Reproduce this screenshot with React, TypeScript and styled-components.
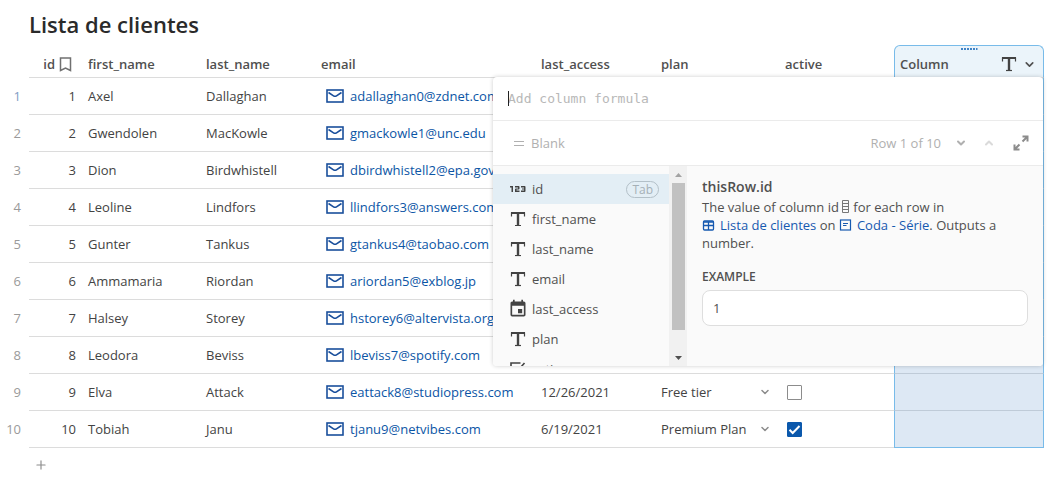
import React from "react";
import styled, { createGlobalStyle } from "styled-components";
import { ChevronDown, ChevronUp, Plus } from "lucide-react";
import { Md123, MdEvent } from "react-icons/md";

const GlobalStyle = createGlobalStyle`
  * { box-sizing: border-box; }
  body {
    margin: 0;
    background: #fff;
    color: #434343;
    font-family: "Open Sans", "Noto Sans", sans-serif;
    font-size: 13px;
    line-height: 18px;
  }
  button, input, select { font: inherit; color: inherit; }
`;

const Page = styled.main`
  padding: 8px 12px 0 0;
`;

const Title = styled.h1`
  margin: 0 0 5px 29px;
  font-size: 22px;
  line-height: 32px;
  font-weight: 600;
  color: #2a2a2a;
`;

const Table = styled.table`
  width: 100%;
  table-layout: fixed;
  border-collapse: separate;
  border-spacing: 0;
`;

const Col = styled.col<{ $w?: number }>`
  width: ${(p) => (p.$w ? `${p.$w}px` : "auto")};
`;

const HeadCell = styled.th`
  height: 33px;
  padding: 6px 6px 0;
  border-bottom: 1px solid #dcdcdc;
  text-align: left;
  font-weight: 600;
  color: #505050;
  white-space: nowrap;
`;

const IdHead = styled.span`
  display: flex;
  align-items: center;
  justify-content: flex-end;
  gap: 4px;
  padding-right: 4px;
`;

const Corner = styled.td`
  padding: 0;
`;

const SelectedHead = styled(HeadCell)`
  position: relative;
  padding: 5px 5px 0;
  border: 1px solid #78bbe9;
  border-bottom-color: #dcdcdc;
  border-radius: 6px 6px 0 0;
  background: #ebf4fa;
`;

const SelectedLabel = styled.div`
  display: flex;
  align-items: center;
  gap: 4px;
  height: 18px;
  padding-right: 2px;
`;

const Grow = styled.span`
  flex: 1;
`;

const DragDots = styled.span`
  position: absolute;
  top: 2px;
  left: 50%;
  width: 17px;
  height: 2px;
  transform: translateX(-50%);
  background: repeating-linear-gradient(90deg, #3f83c6 0 2px, transparent 2px 3px);
`;

const IconButton = styled.button`
  display: inline-flex;
  align-items: center;
  justify-content: center;
  padding: 0;
  border: 0;
  background: none;
  color: inherit;
`;

const Cell = styled.td<{ $right?: boolean }>`
  height: 37px;
  padding: 0 6px;
  border-bottom: 1px solid #dcdcdc;
  text-align: ${(p) => (p.$right ? "right" : "left")};
  white-space: nowrap;
`;

const RowNumber = styled.th<{ $current?: boolean }>`
  padding: 0 8px 2px 0;
  text-align: right;
  font-weight: 400;
  color: ${(p) => (p.$current ? "#7f9dc4" : "#9a9a9a")};
`;

const SelectedCell = styled(Cell)<{ $last?: boolean }>`
  background: #dde8f4;
  border-left: 1px solid #78bbe9;
  border-right: 1px solid #78bbe9;
  border-bottom-color: ${(p) => (p.$last ? "#78bbe9" : "#bfcbd8")};
`;

const Email = styled.a`
  display: flex;
  align-items: center;
  gap: 6px;
  padding-left: 5px;
  color: #0b55a5;
  text-decoration: none;
`;

const PlanBox = styled.div`
  display: flex;
  align-items: center;
  justify-content: space-between;
  padding-right: 2px;
  svg { color: #8c8c8c; }
`;

const PlanSelect = styled.select`
  flex: 1;
  min-width: 0;
  padding: 0;
  border: 0;
  background: none;
  appearance: none;
`;

const Check = styled.input`
  display: block;
  appearance: none;
  width: 15px;
  height: 15px;
  margin: 0 0 0 2px;
  border: 1px solid #8c8c8c;
  border-radius: 1px;
  background: #fff;
  &:checked {
    border-color: #0b58ac;
    background: #0b58ac
      url("data:image/svg+xml,%3Csvg xmlns='http://www.w3.org/2000/svg' viewBox='0 0 13 13' fill='none' stroke='white' stroke-width='2'%3E%3Cpath d='M1.5 6.8l3.2 3.2 6.8-7'/%3E%3C/svg%3E")
      center / 13px 13px no-repeat;
  }
`;

const AddRow = styled(IconButton)`
  margin: 10px 0 0 34px;
  color: #8c8c8c;
`;

const Popup = styled.section`
  position: absolute;
  z-index: 2;
  top: 31px;
  right: 0;
  width: 550px;
  overflow: hidden;
  border-radius: 4px;
  background: #fff;
  box-shadow: 0 0 4px rgba(0, 0, 0, 0.2);
  font-weight: 400;
  color: #505050;
  white-space: normal;
`;

const FormulaInput = styled.input`
  display: block;
  width: 100%;
  height: 43px;
  padding: 0 15px;
  border: 0;
  outline: 0;
  background: none;
  font-family: "DejaVu Sans Mono", "Liberation Mono", monospace;
  font-size: 13px;
  &::placeholder { color: #b8b8b8; opacity: 1; }
`;

const FormulaRow = styled.div`
  position: relative;
  border-bottom: 1px solid #ebebeb;
`;

const Caret = styled.span`
  position: absolute;
  top: 14px;
  left: 15px;
  width: 1px;
  height: 15px;
  background: #222;
`;

const ResultBar = styled.div`
  display: flex;
  align-items: center;
  height: 45px;
  padding: 0 14px 0 20px;
  border-bottom: 1px solid #ebebeb;
  color: #b0b0b0;
`;

const Blank = styled.span`
  display: flex;
  flex: 1;
  align-items: center;
  gap: 6px;
`;

const Pager = styled.div`
  display: flex;
  align-items: center;
  gap: 12px;
`;

const PageButton = styled(IconButton)<{ $dim?: boolean }>`
  width: 16px;
  color: ${(p) => (p.$dim ? "#dadada" : "#b0b0b0")};
`;

const ExpandButton = styled(IconButton)`
  margin-left: 4px;
  color: #8c8c8c;
`;

const PopupBody = styled.div`
  display: flex;
  height: 200px;
  background: #fafafa;
`;

const Suggestions = styled.ul`
  width: 176px;
  margin: 0;
  padding: 8px 0 0;
  overflow: hidden;
  list-style: none;
`;

const Suggestion = styled.li<{ $active?: boolean }>`
  display: flex;
  align-items: center;
  gap: 2px;
  height: 30px;
  padding: 0 10px 0 13px;
  background: ${(p) => (p.$active ? "#e3eef5" : "none")};
`;

const Glyph = styled.span`
  display: flex;
  justify-content: center;
  width: 24px;
  color: #434343;
  svg { flex: none; }
`;

const TabHint = styled.kbd`
  padding: 0 5px;
  border: 1px solid #b3c0c8;
  border-radius: 9px;
  font-family: inherit;
  font-size: 12px;
  line-height: 15px;
  color: #a5b0b7;
`;

const Scrollbar = styled.div`
  display: flex;
  flex-direction: column;
  align-items: center;
  width: 18px;
  background: #f1f1f1;
`;

const Thumb = styled.div`
  flex: 1;
  width: 13px;
  margin-bottom: 19px;
  background: #c1c1c1;
`;

const ArrowSlot = styled.span`
  display: flex;
  align-items: center;
  justify-content: center;
  height: 17px;
`;

const Details = styled.div`
  flex: 1;
  padding: 12px 15px 0;
`;

const DetailTitle = styled.h2`
  margin: 0 0 2px;
  font-size: 14px;
  line-height: 18px;
  font-weight: 600;
`;

const Description = styled.p`
  margin: 0 0 16px;
  svg { vertical-align: -1px; }
`;

const ObjectLink = styled.a`
  color: #1659b0;
  text-decoration: none;
  white-space: nowrap;
  svg { margin-right: 5px; }
`;

const ExampleLabel = styled.h3`
  margin: 0 0 4px;
  font-size: 12px;
  line-height: 18px;
  font-weight: 600;
`;

const Example = styled.output`
  display: flex;
  align-items: center;
  height: 36px;
  padding: 0 10px;
  border: 1px solid #dedede;
  border-radius: 8px;
  background: #fff;
`;

const BookmarkIcon = () => (
  <svg width="13" height="15" viewBox="0 0 13 15" fill="none" stroke="#707070" strokeWidth="1.5">
    <path d="M1.5 1h10v12.500l-5-2.500-5 2.500z" />
  </svg>
);

const MailIcon = () => (
  <svg width="18" height="14" viewBox="0 0 18 14" fill="none" stroke="#1a4f9c" strokeWidth="1.6">
    <rect x="1" y="1" width="16" height="12" />
    <path d="M2.500 3.500l5 3.300q1.500 1 3 0l5-3.300" />
  </svg>
);

const ExpandIcon = () => (
  <svg width="16" height="16" viewBox="0 0 16 16" fill="none" stroke="currentColor" strokeWidth="2">
    <path d="M9.500 1.500h5v5M14 2 9.500 6.500M6.500 14.500h-5v-5M2 14l4.500-4.500" />
  </svg>
);

const ColumnIcon = () => (
  <svg width="11" height="13" viewBox="0 0 11 13" fill="none" stroke="#777">
    <path d="M3.500 .5h6v12h-6zM3.500 3.500h6M3.500 6.500h6M3.500 9.500h6" />
  </svg>
);

const TableIcon = () => (
  <svg width="13" height="11" viewBox="0 0 13 11" fill="none" stroke="currentColor" strokeWidth="1.300">
    <rect x="1.500" y="1" width="10" height="9" rx="1" />
    <path d="M1.500 2h10M1.500 5.500h10M6.500 2v8" />
  </svg>
);

const DocIcon = () => (
  <svg width="13" height="12" viewBox="0 0 13 12" fill="none" stroke="currentColor" strokeWidth="1.200">
    <rect x="1.500" y="1" width="10" height="10" />
    <path d="M4 4.500h5M4 6.500h3.500" />
  </svg>
);

const ScrollArrow = ({ up }: { up?: boolean }) => (
  <svg width="7" height="4" viewBox="0 0 7 4" fill={up ? "#a3a3a3" : "#505050"}>
    <path d={up ? "M0 4 3.500 0 7 4z" : "M0 0h7L3.500 4z"} />
  </svg>
);

const TextGlyph = () => (
  <svg width="20" height="20" viewBox="0 0 20 20" fill="none" stroke="#434343">
    <path d="M3 4h14" strokeWidth="2" />
    <path d="M3.500 3.500v4M16.500 3.500v4" strokeWidth="1.200" />
    <path d="M10 4v12.500" strokeWidth="2.400" />
    <path d="M7 16.500h6" strokeWidth="1.200" />
  </svg>
);

const CheckGlyph = () => (
  <svg width="20" height="20" viewBox="0 0 20 20" fill="none" stroke="currentColor" strokeWidth="1.600">
    <path d="M12.500 4H3v13h13v-6" />
    <path d="M6.500 9l3 3 7-8" />
  </svg>
);

type Client = {
  first: string;
  last: string;
  email: string;
  access?: string;
  plan?: string;
  active?: boolean;
};

const clients: Client[] = [
  { first: "Axel", last: "Dallaghan", email: "adallaghan0@zdnet.com" },
  { first: "Gwendolen", last: "MacKowle", email: "gmackowle1@unc.edu" },
  { first: "Dion", last: "Birdwhistell", email: "dbirdwhistell2@epa.gov" },
  { first: "Leoline", last: "Lindfors", email: "llindfors3@answers.com" },
  { first: "Gunter", last: "Tankus", email: "gtankus4@taobao.com" },
  { first: "Ammamaria", last: "Riordan", email: "ariordan5@exblog.jp" },
  { first: "Halsey", last: "Storey", email: "hstorey6@altervista.org" },
  { first: "Leodora", last: "Beviss", email: "lbeviss7@spotify.com" },
  { first: "Elva", last: "Attack", email: "eattack8@studiopress.com", access: "12/26/2021", plan: "Free tier", active: false },
  { first: "Tobiah", last: "Janu", email: "tjanu9@netvibes.com", access: "6/19/2021", plan: "Premium Plan", active: true },
];

const suggestions = [
  { name: "id", icon: <Md123 size={24} /> },
  { name: "first_name", icon: <TextGlyph /> },
  { name: "last_name", icon: <TextGlyph /> },
  { name: "email", icon: <TextGlyph /> },
  { name: "last_access", icon: <MdEvent size={20} /> },
  { name: "plan", icon: <TextGlyph /> },
  { name: "active", icon: <CheckGlyph /> },
];

const FormulaPopup = () => (
  <Popup aria-label="Column formula">
    <FormulaRow>
      <FormulaInput aria-label="Formula" placeholder="Add column formula" />
      <Caret />
    </FormulaRow>
    <ResultBar>
      <Blank>
        <svg width="12" height="8" viewBox="0 0 12 8" stroke="currentColor">
          <path d="M1 2.500h10M1 6.500h10" />
        </svg>
        Blank
      </Blank>
      <Pager>
        <span>Row 1 of 10</span>
        <PageButton aria-label="Next row"><ChevronDown size={12} strokeWidth={4} /></PageButton>
        <PageButton $dim aria-label="Previous row"><ChevronUp size={12} strokeWidth={4} /></PageButton>
        <ExpandButton aria-label="Expand"><ExpandIcon /></ExpandButton>
      </Pager>
    </ResultBar>
    <PopupBody>
      <Suggestions>
        {suggestions.map((s, i) => (
          <Suggestion key={s.name} $active={i === 0}>
            <Glyph>{s.icon}</Glyph>
            <Grow>{s.name}</Grow>
            {i === 0 && <TabHint>Tab</TabHint>}
          </Suggestion>
        ))}
      </Suggestions>
      <Scrollbar aria-hidden>
        <ArrowSlot><ScrollArrow up /></ArrowSlot>
        <Thumb />
        <ArrowSlot><ScrollArrow /></ArrowSlot>
      </Scrollbar>
      <Details>
        <DetailTitle>thisRow.id</DetailTitle>
        <Description>
          The value of column id<ColumnIcon /> for each row in{" "}
          <br />
          <ObjectLink href="#table"><TableIcon />Lista de clientes</ObjectLink> on{" "}
          <ObjectLink href="#doc"><DocIcon />Coda - Série</ObjectLink>. Outputs a{" "}
          <br />
          number.
        </Description>
        <ExampleLabel>EXAMPLE</ExampleLabel>
        <Example>1</Example>
      </Details>
    </PopupBody>
  </Popup>
);

export default function App() {
  return (
    <Page>
      <GlobalStyle />
      <Title>Lista de clientes</Title>
      <Table>
        <colgroup>
          <Col $w={29} />
          <Col $w={53} />
          <Col $w={118} />
          <Col $w={115} />
          <Col $w={220} />
          <Col $w={120} />
          <Col $w={124} />
          <Col />
          <Col $w={150} />
        </colgroup>
        <thead>
          <tr>
            <Corner />
            <HeadCell scope="col"><IdHead>id<BookmarkIcon /></IdHead></HeadCell>
            <HeadCell scope="col">first_name</HeadCell>
            <HeadCell scope="col">last_name</HeadCell>
            <HeadCell scope="col">email</HeadCell>
            <HeadCell scope="col">last_access</HeadCell>
            <HeadCell scope="col">plan</HeadCell>
            <HeadCell scope="col">active</HeadCell>
            <SelectedHead scope="col">
              <DragDots />
              <SelectedLabel>
                <Grow>Column</Grow>
                <TextGlyph />
                <IconButton aria-label="Column options"><ChevronDown size={13} strokeWidth={3} /></IconButton>
              </SelectedLabel>
              <FormulaPopup />
            </SelectedHead>
          </tr>
        </thead>
        <tbody>
          {clients.map((c, i) => (
            <tr key={c.email}>
              <RowNumber scope="row" $current={i === 0}>{i + 1}</RowNumber>
              <Cell $right>{i + 1}</Cell>
              <Cell>{c.first}</Cell>
              <Cell>{c.last}</Cell>
              <Cell><Email href={`mailto:${c.email}`}><MailIcon />{c.email}</Email></Cell>
              <Cell>{c.access}</Cell>
              <Cell>
                {c.plan && (
                  <PlanBox>
                    <PlanSelect aria-label={`Plan of ${c.first}`} defaultValue={c.plan}>
                      <option>{c.plan}</option>
                    </PlanSelect>
                    <ChevronDown size={12} strokeWidth={3} />
                  </PlanBox>
                )}
              </Cell>
              <Cell>
                {c.active !== undefined && (
                  <Check type="checkbox" aria-label={`${c.first} active`} defaultChecked={c.active} />
                )}
              </Cell>
              <SelectedCell $last={i === clients.length - 1} />
            </tr>
          ))}
        </tbody>
      </Table>
      <AddRow aria-label="Add row"><Plus size={14} /></AddRow>
    </Page>
  );
}
